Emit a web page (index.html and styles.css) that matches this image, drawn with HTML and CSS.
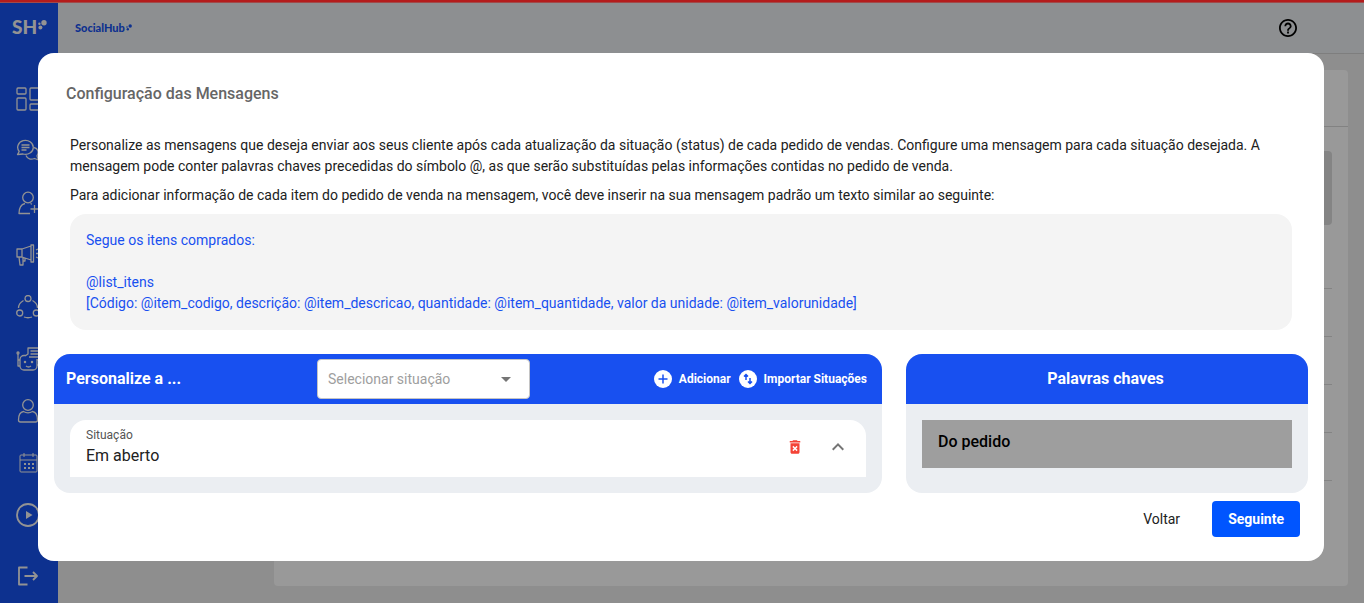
FILE: index.html
```html
<!DOCTYPE html>
<html lang="pt-BR">
<head>
    <meta charset="UTF-8">
    <meta name="viewport" content="width=device-width, initial-scale=1">
    <title>SocialHub</title>
    <link rel="stylesheet" href="styles.css">
</head>
<body>
<div class="progress"></div>
<div class="app">
    <nav class="sidebar">
        <a class="logo" href="#" aria-label="Início">
            <span>SH</span>
            <svg width="9" height="10" viewBox="0 0 9 10"><circle cx="6" cy="2.800" r="2.700"/><circle cx="1.400" cy="3.800" r="1.200"/><circle cx="2.400" cy="7.600" r="2"/></svg>
        </a>
        <a class="nav-item" href="#" aria-label="Painel">
            <svg viewBox="0 0 24 24"><rect x="1" y="1" width="9" height="6" rx="1"/><rect x="1" y="11" width="9" height="12" rx="1"/><rect x="14" y="1" width="9" height="12" rx="1"/><rect x="14" y="17" width="9" height="6" rx="1"/></svg>
        </a>
        <a class="nav-item" href="#" aria-label="Conversas">
            <svg viewBox="0 0 24 24"><path d="M1.500 15.500l1.700-3A7.800 7 0 1 1 7 15z"/><path d="M5.500 6h8M5.500 8.500h8M5.500 11h5"/><path d="M18 8.500c4 1 5.500 5 3 8.500l1.500 4-4-1.500c-3.500 1.500-7 .500-8.500-3"/></svg>
        </a>
        <a class="nav-item" href="#" aria-label="Novo contato">
            <svg viewBox="0 0 24 24"><circle cx="12" cy="6.500" r="5.300"/><path d="M9 12.500c-4 1-6 4-6 10h11M14.500 12.500l1.500.800M18.500 14v8M14.500 18h8"/></svg>
        </a>
        <a class="nav-item" href="#" aria-label="Campanhas">
            <svg viewBox="0 0 24 24"><path d="M1 6h5v8H1zM6 6l9-3v14l-9-3M15 2h2.500v17H15zM3 14l1 8h3V14.500M7 18h2v-3M20 7l2-1M20 10.500h3M20 14l2 1"/></svg>
        </a>
        <a class="nav-item" href="#" aria-label="Integrações">
            <svg viewBox="0 0 24 24"><circle cx="12" cy="3.500" r="3"/><circle cx="3.700" cy="18" r="3"/><circle cx="20.300" cy="18" r="3"/><path d="M7.500 5.500C4 7.500 2.500 10 2.500 13M16.500 5.500c3.500 2 5 4.500 5 7.500M8 22q4 1.500 8 0"/></svg>
        </a>
        <a class="nav-item" href="#" aria-label="Robôs">
            <svg viewBox="0 0 24 24"><path d="M10 8.500H8a4 4 0 0 0-4 4V19a4 4 0 0 0 4 4h9a4 4 0 0 0 4-4v-7M4 13H2v6h2M2 13V7M21 13h2v5h-2M9 9l3-2V1h11v9H13M14.500 4H23M14.500 7H23M10 19q2.500 2 5 0"/><circle cx="2" cy="6" r="1"/><circle cx="9" cy="15" r=".6"/><circle cx="16" cy="15" r=".6"/></svg>
        </a>
        <a class="nav-item" href="#" aria-label="Usuários">
            <svg viewBox="0 0 24 24"><circle cx="12" cy="6" r="5.300"/><path d="M7.500 12.500C4.500 13 2.500 16 2.500 21c0 1.500.500 2 2 2h15c1.500 0 2-.500 2-2 0-5-2-8-5-8.500-3 1.800-6 1.800-9 0z"/></svg>
        </a>
        <a class="nav-item thin" href="#" aria-label="Agenda">
            <svg viewBox="0 0 24 24"><rect x="4" y="4" width="17" height="17" rx="1"/><path d="M4 9h17M8 2v4M17 2v4"/><path class="dots" d="M8 13h10.500M8 17h10.500"/></svg>
        </a>
        <a class="nav-item bold" href="#" aria-label="Tutoriais">
            <svg viewBox="0 0 24 24"><circle cx="12" cy="12" r="11"/><path class="fill" d="M10 8l6.500 4-6.500 4z"/></svg>
        </a>
        <a class="nav-item bold exit" href="#" aria-label="Sair">
            <svg viewBox="0 0 24 24"><path d="M11.500 3.500H3v17h8.500M8.500 12H21M17 8l4 4-4 4"/></svg>
        </a>
    </nav>
    <div class="main">
        <header class="topbar">
            <a class="brand" href="#">
                <span>SocialHub</span>
                <svg width="6" height="8" viewBox="0 0 6 8"><circle cx="4.200" cy="2" r="1.700"/><circle cx="1" cy="3" r=".8"/><circle cx="1.800" cy="5.200" r="1.200"/></svg>
            </a>
            <button class="help" type="button" aria-label="Ajuda">
                <svg width="18" height="18" viewBox="2 2 20 20"><path d="M11 18h2v-2h-2v2zm1-16C6.480 2 2 6.480 2 12s4.480 10 10 10 10-4.480 10-10S17.520 2 12 2zm0 18c-4.410 0-8-3.590-8-8s3.590-8 8-8 8 3.590 8 8-3.590 8-8 8zm0-14c-2.210 0-4 1.790-4 4h2c0-1.100.900-2 2-2s2 .900 2 2c0 2-3 1.750-3 5h2c0-2.250 3-2.500 3-5 0-2.210-1.790-4-4-4z"/></svg>
            </button>
        </header>
        <div class="page">
            <div class="page-head"></div>
            <div class="page-body">
                <div class="banner"></div>
                <div class="line first"></div>
                <div class="line"></div>
                <div class="line"></div>
                <div class="line"></div>
                <div class="line"></div>
            </div>
        </div>
    </div>
</div>

<div class="overlay">
    <div class="modal" role="dialog" aria-modal="true" aria-labelledby="modal-title">
        <h2 class="modal-title" id="modal-title">Configuração das Mensagens</h2>
        <div class="intro">
            <p>Personalize as mensagens que deseja enviar aos seus cliente após cada atualização da situação (status) de cada pedido de vendas. Configure uma mensagem para cada situação desejada. A mensagem pode conter palavras chaves precedidas do símbolo @, as que serão substituídas pelas informações contidas no pedido de venda.</p>
            <p>Para adicionar informação de cada item do pedido de venda na mensagem, você deve inserir na sua mensagem padrão um texto similar ao seguinte:</p>
            <div class="sample">
                Segue os itens comprados:<br><br>
                @list_itens<br>
                [Código: @item_codigo, descrição: @item_descricao, quantidade: @item_quantidade, valor da unidade: @item_valorunidade]
            </div>
        </div>
        <div class="panels">
            <section class="panel messages">
                <div class="panel-head">
                    <h3>Personalize a ...</h3>
                    <div class="select">
                        <select aria-label="Selecionar situação">
                            <option>Selecionar situação</option>
                            <option>Em aberto</option>
                        </select>
                        <svg width="24" height="24" viewBox="0 0 24 24"><path d="M7 10l5 5 5-5z"/></svg>
                    </div>
                    <div class="actions">
                        <button type="button">
                            <svg width="18" height="18" viewBox="0 0 18 18"><circle cx="9" cy="9" r="9"/><path d="M9 4.500v9M4.500 9h9"/></svg>
                            Adicionar
                        </button>
                        <button type="button">
                            <svg width="18" height="18" viewBox="0 0 18 18"><circle cx="9" cy="9" r="9"/><path d="M7 10V5M5 6.500l2-2 2 2M11 8v5M9 11.500l2 2 2-2"/></svg>
                            Importar Situações
                        </button>
                    </div>
                </div>
                <div class="panel-body">
                    <div class="status">
                        <div class="status-text">
                            <span class="status-label">Situação</span>
                            <span class="status-name">Em aberto</span>
                        </div>
                        <button class="delete" type="button" aria-label="Excluir">
                            <svg width="18" height="18" viewBox="0 0 24 24"><path d="M6 19c0 1.100.900 2 2 2h8c1.100 0 2-.900 2-2V7H6v12zm2.460-7.120l1.410-1.410L12 12.590l2.120-2.120 1.410 1.410L13.410 14l2.120 2.120-1.410 1.410L12 15.410l-2.120 2.120-1.410-1.410L10.590 14l-2.130-2.120zM15.500 4l-1-1h-5l-1 1H5v2h14V4z"/></svg>
                        </button>
                        <button class="toggle" type="button" aria-label="Expandir">
                            <svg width="24" height="24" viewBox="0 0 24 24"><path d="M12 8l-6 6 1.410 1.410L12 10.830l4.590 4.580L18 14z"/></svg>
                        </button>
                    </div>
                </div>
            </section>
            <section class="panel keywords">
                <div class="panel-head">
                    <h3>Palavras chaves</h3>
                </div>
                <div class="panel-body">
                    <div class="group">Do pedido</div>
                </div>
            </section>
        </div>
        <div class="modal-actions">
            <button class="btn" type="button">Voltar</button>
            <button class="btn primary" type="button">Seguinte</button>
        </div>
    </div>
</div>
</body>
</html>
```
FILE: styles.css
```css
*{
    box-sizing: border-box;
    margin: 0;
    padding: 0;
}
body{
    font-family: Roboto, "Liberation Sans", sans-serif;
    font-size: 14px;
    line-height: 21px;
    color: #212121;
    background-color: #ededed;
    overflow: hidden;
}
button{
    font: inherit;
    color: inherit;
    border: 0;
    background: none;
    cursor: pointer;
}
a{
    text-decoration: none;
}
svg{
    display: block;
    flex: none;
}
.progress{
    position: fixed;
    top: 0;
    left: 0;
    right: 0;
    height: 3px;
    background-color: #b41c1c;
    border-bottom: 1px solid #a04a4a;
    z-index: 20;
}
.app{
    display: flex;
    min-height: 100vh;
}
/* menu lateral */
.sidebar{
    width: 58px;
    flex: none;
    display: flex;
    flex-direction: column;
    background-color: #1752ee;
}
.logo{
    display: flex;
    gap: 1px;
    height: 73px;
    padding: 16px 0 0 12px;
    color: #f5f5f5;
    font: 900 19px/22px Lato, sans-serif;
}
.logo svg{
    margin-top: 4px;
    fill: #f5f5f5;
}
.nav-item{
    display: flex;
    align-items: center;
    height: 52px;
    padding-left: 16px;
}
.nav-item svg{
    width: 24px;
    height: 24px;
    fill: none;
    stroke: #f5f5f5;
    stroke-width: 1.3;
    stroke-linejoin: round;
}
.nav-item.thin svg{
    stroke-width: 1;
}
.nav-item.bold svg{
    stroke-width: 1.8;
}
.nav-item .fill{
    fill: #f5f5f5;
    stroke: none;
}
.nav-item .dots{
    stroke-width: 2;
    stroke-dasharray: 2 2;
}
.nav-item.exit{
    margin-top: 9px;
}
/* página de fundo */
.main{
    flex: 1;
    display: flex;
    flex-direction: column;
}
.topbar{
    display: flex;
    align-items: center;
    justify-content: space-between;
    height: 54px;
    padding: 2px 67px 0 17px;
    background-color: #ebeff2;
    border-bottom: 1px solid #d2d2d2;
}
.brand{
    display: flex;
    align-items: center;
    gap: 1px;
    color: #1752ee;
    font: 900 11px/14px Lato, sans-serif;
}
.brand svg{
    fill: #1752ee;
}
.page{
    flex: 1;
    margin: 16px 16px 17px 216px;
    background-color: #fff;
    border-radius: 4px;
}
.page-head{
    height: 57px;
    border-bottom: 1px solid #d9d9d9;
}
.page-body{
    padding: 24px 16px;
}
.banner{
    height: 74px;
    border-radius: 4px;
    background-color: #dcdcdc;
}
.line{
    height: 48px;
    border-bottom: 1px solid #dcdcdc;
}
.line.first{
    height: 64px;
}
/* modal */
.overlay{
    position: fixed;
    inset: 0;
    padding: 53px 40px 40px 38px;
    background-color: rgba(0,0,0,.4);
    overflow: auto;
    z-index: 10;
}
.modal{
    background-color: #fff;
    border-radius: 16px;
}
.modal-title{
    padding: 29px 28px;
    font-size: 16px;
    font-weight: 500;
    line-height: 24px;
    color: #666;
}
.intro{
    padding: 0 32px 24px;
}
.intro p{
    margin-bottom: 8px;
}
.sample{
    padding: 16px;
    border-radius: 16px;
    background-color: #f4f4f4;
    color: #1850f0;
}
.panels{
    display: grid;
    grid-template-columns: repeat(12, 1fr);
    gap: 24px;
    padding: 0 16px;
}
.panel{
    border-radius: 16px;
    background-color: #ebeef2;
    overflow: hidden;
}
.messages{
    grid-column: span 8;
}
.keywords{
    grid-column: span 4;
}
.panel-head{
    display: flex;
    align-items: center;
    height: 50px;
    padding: 0 15px 0 12px;
    background-color: #1850f0;
    color: #fff;
}
.panel-head h3{
    font-size: 16px;
    font-weight: 700;
    line-height: 24px;
}
.messages h3{
    width: 251px;
}
.keywords h3{
    flex: 1;
    text-align: center;
}
.select{
    display: grid;
    align-items: center;
    width: 213px;
}
.select select{
    grid-area: 1 / 1;
    width: 100%;
    height: 40px;
    padding: 0 36px 0 10px;
    appearance: none;
    font: inherit;
    color: #9e9e9e;
    background-color: #fff;
    border: 1px solid #c4c4c4;
    border-radius: 4px;
}
.select svg{
    grid-area: 1 / 1;
    justify-self: end;
    margin-right: 12px;
    fill: #757575;
    pointer-events: none;
}
.actions{
    display: flex;
    gap: 8px;
    margin-left: auto;
}
.actions button{
    display: flex;
    align-items: center;
    gap: 7px;
    font-size: 12px;
    font-weight: 700;
}
.actions circle{
    fill: #fff;
}
.actions path{
    fill: none;
    stroke: #1850f0;
    stroke-width: 1.5;
}
.panel-body{
    padding: 16px;
}
.status{
    display: flex;
    align-items: center;
    height: 57px;
    padding: 0 16px 4px;
    border-radius: 16px 16px 0 0;
    background-color: #fff;
}
.status-text{
    display: flex;
    flex-direction: column;
    flex: 1;
}
.status-label{
    font-size: 12px;
    line-height: 18px;
    color: #555;
}
.status-name{
    font-size: 16px;
    line-height: 24px;
}
.delete{
    margin-right: 22px;
    fill: #f44336;
}
.toggle{
    fill: #757575;
}
.group{
    height: 48px;
    padding: 10px 16px;
    background-color: #9e9e9e;
    color: #000;
    font-size: 16px;
    font-weight: 500;
    line-height: 24px;
}
.modal-actions{
    display: flex;
    justify-content: flex-end;
    gap: 16px;
    padding: 8px 24px 24px;
}
.btn{
    height: 36px;
    padding: 0 16px;
    border-radius: 4px;
}
.btn.primary{
    background-color: #0055ff;
    color: #fff;
    font-weight: 700;
}
```
